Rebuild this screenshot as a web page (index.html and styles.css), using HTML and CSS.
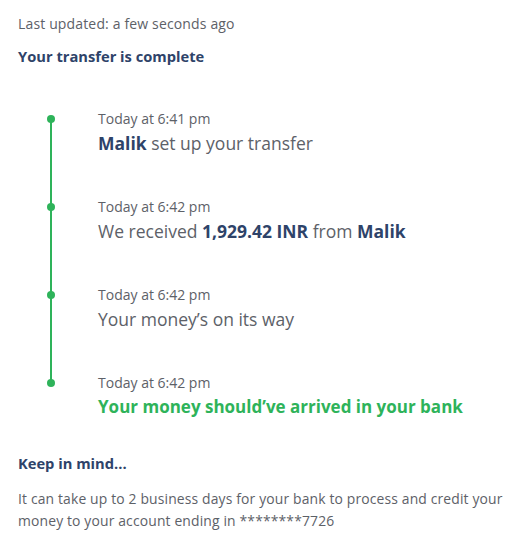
FILE: index.html
```html
<!DOCTYPE html>
<html lang="en">
<head>
<meta charset="utf-8">
<link rel="stylesheet" href="styles.css">
</head>
<body>
<main class="page">
  <p class="updated">Last updated: a few seconds ago</p>
  <h1 class="status">Your transfer is complete</h1>
  <ol class="timeline">
    <li class="event">
      <span class="dot"></span>
      <div class="event-body">
        <div class="time">Today at 6:41 pm</div>
        <div class="title"><strong>Malik</strong> set up your transfer</div>
      </div>
    </li>
    <li class="event">
      <span class="dot"></span>
      <div class="event-body">
        <div class="time">Today at 6:42 pm</div>
        <div class="title">We received <strong>1,929.42 INR</strong> from <strong>Malik</strong></div>
      </div>
    </li>
    <li class="event">
      <span class="dot"></span>
      <div class="event-body">
        <div class="time">Today at 6:42 pm</div>
        <div class="title">Your money’s on its way</div>
      </div>
    </li>
    <li class="event">
      <span class="dot"></span>
      <div class="event-body">
        <div class="time">Today at 6:42 pm</div>
        <div class="title done">Your money should’ve arrived in your bank</div>
      </div>
    </li>
  </ol>
  <h2 class="note-title">Keep in mind...</h2>
  <p class="note">It can take up to 2 business days for your bank to process and credit your money to your account ending in ********7726</p>
</main>
</body>
</html>
```

FILE: styles.css
```css
* { box-sizing: border-box; }
html, body { margin: 0; padding: 0; background: #fff; }
body {
  font-family: "Open Sans", "Lato", sans-serif;
  color: #5d6168;
}
.page {
  padding: 15px 18px 0 18px;
}
.updated {
  margin: 0;
  font-size: 14px;
  line-height: 18px;
  letter-spacing: 0.15px;
  color: #5d6168;
}
.status {
  margin: 13px 0 0 0;
  font-size: 14.7px;
  line-height: 20px;
  font-weight: 700;
  color: #2e4369;
}
.timeline {
  list-style: none;
  margin: 44px 0 0 0;
  padding: 0;
  position: relative;
}
.timeline::before {
  content: "";
  position: absolute;
  left: 32px;
  top: 9px;
  width: 2px;
  height: 264px;
  background: #2eb35a;
}
.event {
  display: grid;
  grid-template-columns: 80px 1fr;
  height: 88px;
}
.event:last-child { height: auto; }
.dot {
  display: block;
  width: 8px;
  height: 8px;
  margin: 5px 0 0 29px;
  border-radius: 50%;
  background: #2eb35a;
}
.time {
  font-size: 14px;
  line-height: 18px;
  color: #5d6168;
}
.title {
  margin-top: 3px;
  font-size: 17.5px;
  line-height: 24px;
  color: #5d6168;
}
.title strong {
  color: #2e4369;
  font-weight: 700;
}
.title.done {
  font-size: 17px;
  color: #2eb35a;
  font-weight: 700;
}
.note-title {
  margin: 34px 0 0 0;
  font-size: 14.7px;
  line-height: 20px;
  font-weight: 700;
  color: #2e4369;
}
.note {
  margin: 15px 0 0 0;
  font-size: 13.9px;
  line-height: 22px;
  letter-spacing: 0.15px;
  color: #5d6168;
}
```
